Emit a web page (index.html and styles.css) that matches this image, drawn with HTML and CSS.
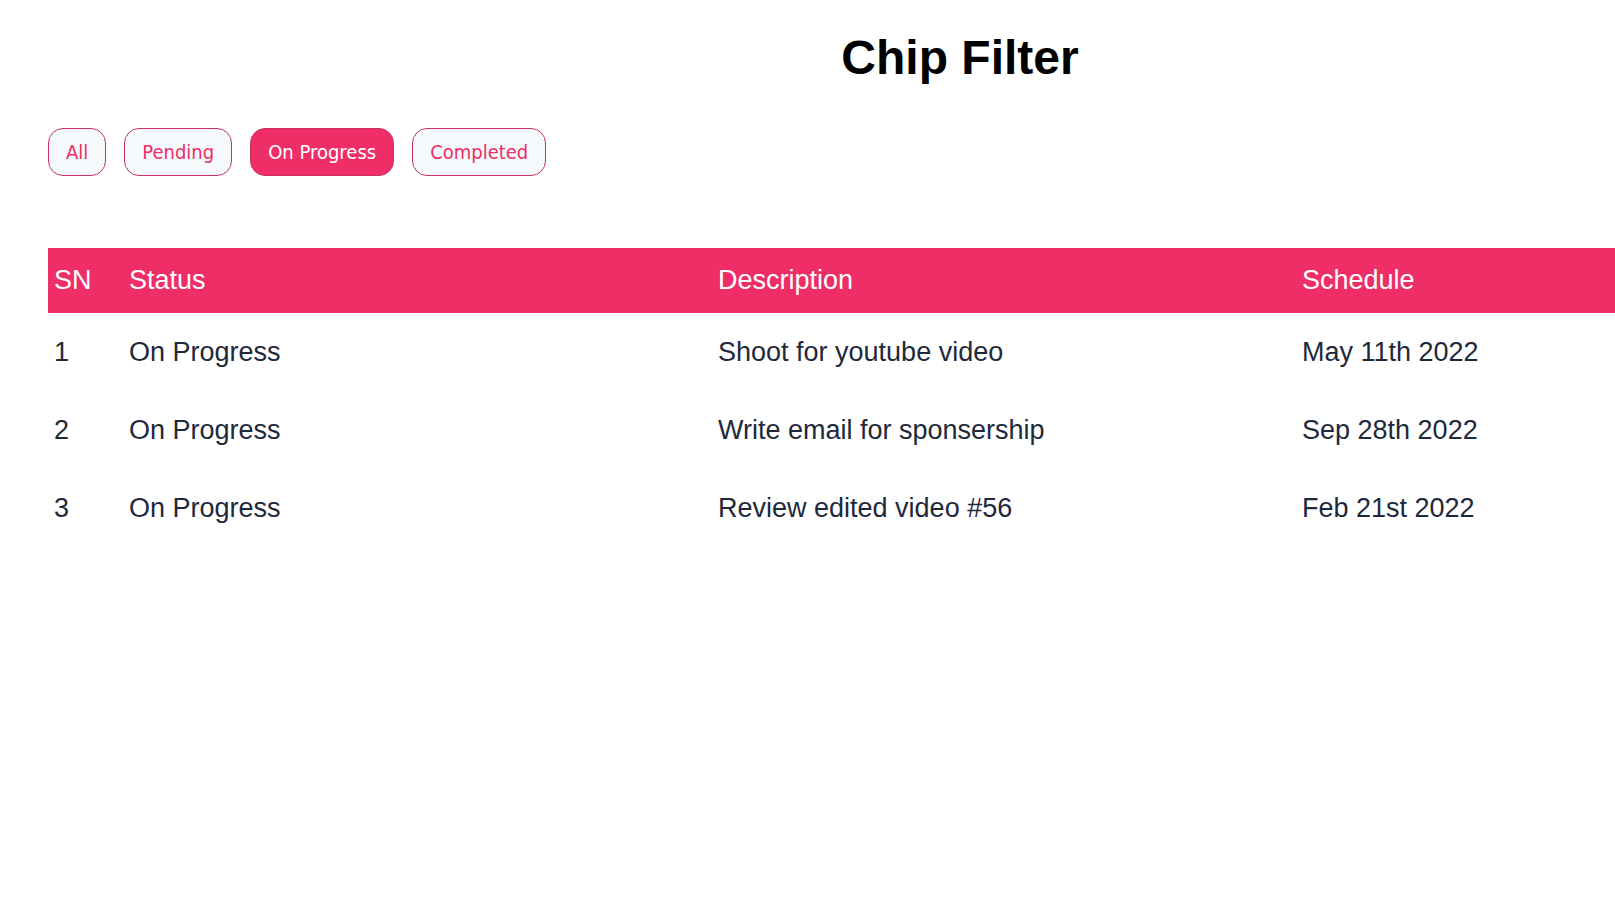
FILE: index.html
```html
<!DOCTYPE html>
<html lang="en">
<head>
  <meta charset="UTF-8">
  <title>Chip Filter</title>
  <link rel="stylesheet" href="styles.css">
</head>
<body>

  <div class="pagina">
    <div class="contenido">
      <h1>Chip Filter</h1>

      <div class="chips">
        <button class="chip">All</button>
        <button class="chip">Pending</button>
        <button class="chip activo">On Progress</button>
        <button class="chip">Completed</button>
      </div>

      <table class="tabla">
        <thead>
          <tr>
            <th class="col-sn">SN</th>
            <th class="col-status">Status</th>
            <th class="col-desc">Description</th>
            <th>Schedule</th>
          </tr>
        </thead>
        <tbody>
          <tr>
            <td>1</td>
            <td>On Progress</td>
            <td>Shoot for youtube video</td>
            <td>May 11th 2022</td>
          </tr>
          <tr>
            <td>2</td>
            <td>On Progress</td>
            <td>Write email for sponsership</td>
            <td>Sep 28th 2022</td>
          </tr>
          <tr>
            <td>3</td>
            <td>On Progress</td>
            <td>Review edited video #56</td>
            <td>Feb 21st 2022</td>
          </tr>
        </tbody>
      </table>
    </div>
  </div>

</body>
</html>
```

FILE: styles.css
```css
body {
  margin: 0;
  background: #fff;
  font-family: 'Liberation Sans', Arial, sans-serif;
}

.pagina {
  width: 100%;
  overflow: hidden;
}

.contenido {
  width: 1824px;
  margin-left: 48px;
}

h1 {
  margin: 30px 0 0;
  text-align: center;
  font-size: 48px;
  font-weight: bold;
  color: #000;
}

.chips {
  display: flex;
  gap: 18px;
  margin-top: 43px;
}

.chip {
  height: 48px;
  padding: 0 17px;
  border: 1px solid #c9325f;
  border-radius: 15px;
  background-color: #f5f9fc;
  color: #ef2d66;
  font-family: 'DejaVu Sans Condensed', 'DejaVu Sans', sans-serif;
  font-stretch: condensed;
  font-size: 20px;
  cursor: pointer;
}

.chip.activo {
  background-color: #ef2d66;
  color: #fff;
}

.tabla {
  width: 100%;
  margin-top: 72px;
  border-collapse: collapse;
  font-size: 27px;
  color: #1e293b;
  text-align: left;
}

.tabla th {
  background-color: #ef2d66;
  color: #fff;
  font-weight: normal;
  padding: 17px 6px;
}

.tabla td {
  padding: 23.5px 6px;
}

.col-sn {
  width: 63px;
}

.col-status {
  width: 577px;
}

.col-desc {
  width: 572px;
}
```
